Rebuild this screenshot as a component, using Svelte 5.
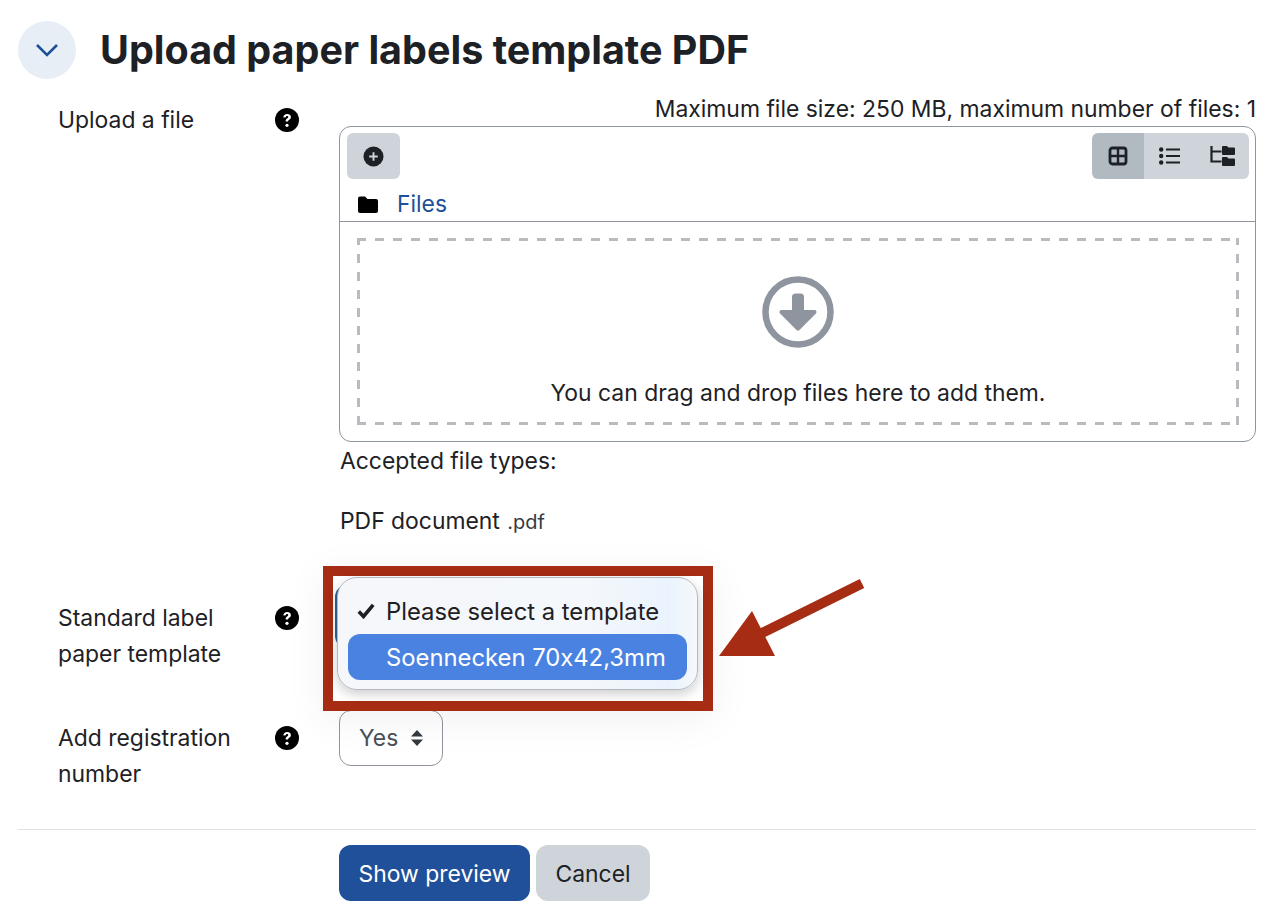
<script lang="ts">
  const views = ['grid', 'list', 'tree']
</script>

{#snippet help()}
  <svg class="help" viewBox="0 0 24 24" aria-hidden="true">
    <circle cx="12" cy="12" r="12" fill="#000" />
    <path d="M8.300 9.400c.1-2.200 1.700-3.500 3.900-3.500 2.100 0 3.700 1.200 3.700 3.100 0 1.400-.8 2.100-1.700 2.700-.8.500-1 .8-1 1.500v.4h-2.500v-.6c0-1.300.5-1.900 1.400-2.500.8-.5 1.200-.8 1.200-1.400 0-.7-.6-1.100-1.200-1.100-.7 0-1.200.4-1.300 1.300z" fill="#fff" />
    <circle cx="12" cy="17.300" r="1.600" fill="#fff" />
  </svg>
{/snippet}

<div class="page">
  <header class="head">
    <span class="toggle">
      <svg viewBox="0 0 24 14" width="24" height="14" aria-hidden="true">
        <path d="M2 2l10 10L22 2" fill="none" stroke="#1d5099" stroke-width="2.600" />
      </svg>
    </span>
    <h1>Upload paper labels template PDF</h1>
  </header>

  <section class="row first">
    <div class="label"><span>Upload a file</span>{@render help()}</div>
    <div class="field">
      <p class="limits">Maximum file size: 250 MB, maximum number of files: 1</p>
      <div class="manager">
        <div class="toolbar">
          <button class="add" aria-label="Add">
            <svg viewBox="0 0 22 22" width="21" height="21" aria-hidden="true">
              <circle cx="11" cy="11" r="10.500" fill="#1d2125" />
              <path d="M11 6.500v9M6.500 11h9" stroke="#ced4da" stroke-width="2" />
            </svg>
          </button>
          <div class="views">
            {#each views as v, i}
              <button class="view" class:active={i === 0} aria-label={v}>
                {#if v === 'grid'}
                  <svg viewBox="0 0 20 20" width="20" height="20" aria-hidden="true">
                    <rect x="2" y="2" width="16" height="16" rx="2.500" fill="none" stroke="#1d2125" stroke-width="2.800" />
                    <path d="M10 2v16M2 10h16" stroke="#1d2125" stroke-width="2.400" />
                  </svg>
                {:else if v === 'list'}
                  <svg viewBox="0 0 22 18" width="22" height="18" aria-hidden="true">
                    <g fill="#1d2125"><circle cx="2.200" cy="2.500" r="2.200" /><circle cx="2.200" cy="9" r="2.200" /><circle cx="2.200" cy="15.500" r="2.200" /></g>
                    <path d="M7 2.500h14M7 9h14M7 15.500h14" stroke="#1d2125" stroke-width="2.200" />
                  </svg>
                {:else}
                  <svg viewBox="0 0 25 20" width="25" height="20" aria-hidden="true">
                    <path d="M1.500 0v15.500h10M1.500 5.500h10" fill="none" stroke="#1d2125" stroke-width="2.200" />
                    <path d="M12 1a1 1 0 0 1 1-1h4l1.500 1.500h5.500a1 1 0 0 1 1 1V8a1 1 0 0 1-1 1H13a1 1 0 0 1-1-1zM12 12a1 1 0 0 1 1-1h4l1.500 1.500h5.500a1 1 0 0 1 1 1V19a1 1 0 0 1-1 1H13a1 1 0 0 1-1-1z" fill="#1d2125" />
                  </svg>
                {/if}
              </button>
            {/each}
          </div>
        </div>
        <div class="path">
          <svg viewBox="0 0 20 17" width="20" height="17" aria-hidden="true">
            <path d="M0 2.500A2 2 0 0 1 2 .5h5l2.500 2.500H18a2 2 0 0 1 2 2V15a2 2 0 0 1-2 2H2a2 2 0 0 1-2-2z" fill="#000" />
          </svg>
          <a href="#files">Files</a>
        </div>
        <div class="dropzone-wrap">
          <div class="dropzone">
            <svg viewBox="0 0 72 72" width="72" height="72" aria-hidden="true">
              <circle cx="36" cy="36" r="32.500" fill="none" stroke="#8f959e" stroke-width="6.500" />
              <path d="M30 21a3.500 3.500 0 0 1 3.500-3.500h5A3.500 3.500 0 0 1 42 21v13h10.500c1.800 0 2.700 2.100 1.400 3.400L37.500 54a2.100 2.100 0 0 1-3 0L18.100 37.400c-1.300-1.300-.4-3.400 1.400-3.400H30z" fill="#8f959e" />
            </svg>
            <p>You can drag and drop files here to add them.</p>
          </div>
        </div>
      </div>
      <p class="accepted">Accepted file types:</p>
      <p class="type">PDF document <small>.pdf</small></p>
    </div>
  </section>

  <section class="row template">
    <div class="label"><span>Standard label paper template</span>{@render help()}</div>
    <div class="field">
      <div class="select-under"></div>
    </div>
  </section>

  <section class="row reg">
    <div class="label"><span>Add registration number</span>{@render help()}</div>
    <div class="field">
      <div class="select">
        Yes
        <svg viewBox="0 0 14 18" width="14" height="18" aria-hidden="true">
          <path d="M7 1l6 6.500H1zM7 17l-6-6.500h12z" fill="#343a40" />
        </svg>
      </div>
    </div>
  </section>

  <div class="actions">
    <button class="primary">Show preview</button>
    <button class="secondary">Cancel</button>
  </div>

  <div class="callout">
    <div class="menu">
      <div class="opt">
        <svg class="tick" viewBox="0 0 18 16" width="18" height="16" aria-hidden="true">
          <path d="M1.800 8.500l4.700 5L16.200 1.800" fill="none" stroke="#1f2022" stroke-width="3.600" />
        </svg>
        Please select a template
      </div>
      <div class="opt on">Soennecken 70x42,3mm</div>
    </div>
  </div>
  <svg class="arrow" viewBox="0 0 150 90" width="150" height="90" aria-hidden="true">
    <path d="M147 7.500L45 58" stroke="#a62c14" stroke-width="10" />
    <path d="M37 35L60 80H4z" fill="#a62c14" />
  </svg>
</div>

<style>
  :global(body) {
    margin: 0;
    background: #fff;
  }

  .page {
    position: relative;
    width: 1284px;
    height: 924px;
    overflow: hidden;
    font-family: Inter, "Liberation Sans", sans-serif;
    font-size: 22.900px;
    font-feature-settings: "calt" 0;
    line-height: 36px;
    color: #1d2125;
  }

  p {
    margin: 0;
  }

  .head {
    display: flex;
    align-items: center;
    gap: 24px;
    padding: 21px 0 0 18px;
    height: 57px;
  }

  .toggle {
    width: 58px;
    height: 58px;
    border-radius: 50%;
    background: #e7eef5;
    display: flex;
    align-items: center;
    justify-content: center;
    flex: none;
  }

  h1 {
    margin: 0;
    font-size: 39.500px;
    font-weight: 700;
    line-height: 58px;
    white-space: nowrap;
  }

  .row {
    display: grid;
    grid-template-columns: 321px 917px;
    margin-left: 18px;
  }

  .label {
    display: grid;
    grid-template-columns: 217px 24px;
    padding-left: 40px;
    align-items: start;
  }

  .help {
    width: 24px;
    height: 24px;
    margin-top: 6px;
  }

  .first {
    margin-top: 24px;
  }

  .limits {
    text-align: right;
    line-height: 26px;
    margin-top: -6px;
    height: 30px;
    white-space: nowrap;
  }

  .manager {
    box-sizing: border-box;
    height: 316px;
    border: 1px solid #8f959e;
    border-radius: 12px;
  }

  .toolbar {
    display: flex;
    justify-content: space-between;
    padding: 6px 6px 0 7px;
  }

  button {
    font: inherit;
    border: none;
    cursor: pointer;
  }

  .add {
    width: 53px;
    height: 46px;
    background: #ced4da;
    border-radius: 6px;
    display: flex;
    align-items: center;
    justify-content: center;
    padding: 0;
  }

  .views {
    display: flex;
    border-radius: 6px;
    overflow: hidden;
  }

  .view {
    width: 52.500px;
    height: 46px;
    background: #ced4da;
    display: flex;
    align-items: center;
    justify-content: center;
    padding: 0;
  }

  .view.active {
    background: #b1b9c1;
  }

  .path {
    display: flex;
    align-items: center;
    gap: 19px;
    height: 34px;
    padding: 8px 0 0 18px;
    border-bottom: 1px solid #8f959e;
  }

  .path a {
    color: #1d5099;
    text-decoration: none;
  }

  .dropzone-wrap {
    padding: 16px 16px 0 17px;
  }

  .dropzone {
    box-sizing: border-box;
    height: 187px;
    display: flex;
    flex-direction: column;
    align-items: center;
    padding-top: 38px;
    background-image:
      repeating-linear-gradient(90deg, #b8bcc1 0 9px, transparent 9px 18px),
      repeating-linear-gradient(90deg, #b8bcc1 0 9px, transparent 9px 18px),
      repeating-linear-gradient(0deg, #b8bcc1 0 9px, transparent 9px 18px),
      repeating-linear-gradient(0deg, #b8bcc1 0 9px, transparent 9px 18px);
    background-size: 100% 3px, 100% 3px, 3px 100%, 3px 100%;
    background-position: top left, bottom left, top left, top right;
    background-repeat: no-repeat;
  }

  .dropzone p {
    margin-top: 27px;
  }

  .accepted {
    margin-top: 1px;
    padding-left: 1px;
  }

  .type {
    margin-top: 24px;
    padding-left: 1px;
  }

  .type small {
    font-size: 20px;
    color: #343a40;
    margin-left: 1px;
  }

  .template {
    margin-top: 60px;
    height: 120px;
  }

  .select-under {
    margin-top: -15px;
    margin-left: -4px;
    width: 340px;
    height: 63px;
    background: #2f6296;
    border-radius: 12px;
  }

  .reg {
    height: 109px;
  }

  .select {
    box-sizing: border-box;
    width: 104px;
    height: 56px;
    display: flex;
    align-items: center;
    gap: 12px;
    padding-left: 19px;
    border: 1px solid #8f959e;
    border-radius: 12px;
    color: #495057;
    margin-top: -10px;
  }

  .actions {
    display: flex;
    gap: 6px;
    margin: 0 28px 0 18px;
    padding: 15px 0 0 321px;
    border-top: 1px solid #dee2e6;
  }

  .actions button {
    height: 56px;
    border-radius: 12px;
    padding: 1px 0 0;
  }

  .primary {
    width: 191px;
    background: #1f5099;
    color: #fff;
  }

  .secondary {
    width: 114px;
    background: #ced4da;
    color: #1d2125;
  }

  .callout {
    position: absolute;
    left: 323px;
    top: 566px;
    width: 390px;
    height: 145px;
    box-sizing: border-box;
    border: 10px solid #a62c14;
    box-shadow: 0 8px 40px rgba(0, 0, 0, 0.06);
  }

  .menu {
    position: absolute;
    left: 4px;
    top: 1px;
    width: 361px;
    height: 113px;
    box-sizing: border-box;
    padding: 10px;
    border-radius: 20px;
    border: 1px solid #b5b8bc;
    background: linear-gradient(90deg, #f5f7fa 0, #f4f7fb 70%, #eaf3fd 92%, #f5f8fc 100%);
    box-shadow: 0 4px 12px rgba(0, 0, 0, 0.2);
  }

  .opt {
    box-sizing: border-box;
    height: 46px;
    display: flex;
    align-items: center;
    padding: 2px 0 0 38px;
    position: relative;
    color: #1f2022;
    font-size: 23.800px;
    white-space: nowrap;
  }

  .tick {
    position: absolute;
    left: 9px;
    top: 15px;
  }

  .opt.on {
    background: #4a82e2;
    color: #fff;
    border-radius: 12px;
  }

  .arrow {
    position: absolute;
    left: 715px;
    top: 576px;
  }
</style>
